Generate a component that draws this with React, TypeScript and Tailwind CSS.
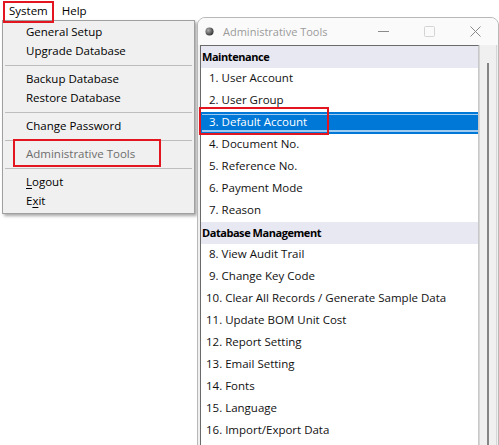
import React from 'react';

type Row = { label: string; kind?: 'header' | 'selected'; wide?: boolean };

const rows: Row[] = [
  { label: 'Maintenance', kind: 'header' },
  { label: '1. User Account' },
  { label: '2. User Group' },
  { label: '3. Default Account', kind: 'selected' },
  { label: '4. Document No.' },
  { label: '5. Reference No.' },
  { label: '6. Payment Mode' },
  { label: '7. Reason' },
  { label: 'Database Management', kind: 'header' },
  { label: '8. View Audit Trail' },
  { label: '9. Change Key Code' },
  { label: '10. Clear All Records / Generate Sample Data', wide: true },
  { label: '11. Update BOM Unit Cost', wide: true },
  { label: '12. Report Setting', wide: true },
  { label: '13. Email Setting', wide: true },
  { label: '14. Fonts', wide: true },
  { label: '15. Language', wide: true },
  { label: '16. Import/Export Data', wide: true },
];

const MenuItem = ({ children, disabled }: { children: React.ReactNode; disabled?: boolean }) => (
  <div className={`h-[19px] flex items-center pl-[23px] pb-[2px] ${disabled ? 'text-[#6d6d6d]' : 'text-black'}`}>
    {children}
  </div>
);

const Separator = () => (
  <div className="h-[9px] flex items-center px-[2px]">
    <div className="w-full h-px bg-[#bdbdbd]" />
  </div>
);

function ListRow({ row }: { row: Row }) {
  if (row.kind === 'header') {
    return (
      <div className="h-[22px] flex items-center pl-[1px] pb-[2px] bg-[#e8e8f3] font-bold text-[11px] tracking-[-0.45px] text-black">
        {row.label}
      </div>
    );
  }
  if (row.kind === 'selected') {
    return (
      <div className="h-[22px] bg-[#0078d7] pl-[1px] py-[2px]">
        <div className="h-full flex items-center border-t border-b-2 border-[#9fcbf0] pl-[7px] pb-[1px] text-white">
          {row.label}
        </div>
      </div>
    );
  }
  return (
    <div className={`h-[22px] flex items-center pb-[2px] text-[#111] ${row.wide ? 'pl-[5px]' : 'pl-[8px]'}`}>
      {row.label}
    </div>
  );
}

export default function App() {
  return (
    <div className="relative w-[499px] h-[445px] overflow-hidden bg-white font-['Open_Sans',sans-serif] text-[11.5px] leading-none">
      {/* Menu bar */}
      <div className="h-[21px] flex items-center pl-[9px] gap-[14px] text-black">
        <span>System</span>
        <span>Help</span>
      </div>

      {/* System dropdown */}
      <div className="absolute left-[2px] top-[20px] w-[193px] py-[2px] bg-[#f0f0f0] border border-[#a0a0a0] shadow-[2px_2px_3px_rgba(0,0,0,0.35)]">
        <MenuItem>General Setup</MenuItem>
        <MenuItem>Upgrade Database</MenuItem>
        <Separator />
        <MenuItem>Backup Database</MenuItem>
        <MenuItem>Restore Database</MenuItem>
        <Separator />
        <MenuItem>Change Password</MenuItem>
        <Separator />
        <MenuItem disabled>Administrative Tools</MenuItem>
        <Separator />
        <MenuItem>
          <span className="underline underline-offset-2">L</span>ogout
        </MenuItem>
        <MenuItem>
          E<span className="underline underline-offset-2">x</span>it
        </MenuItem>
      </div>

      {/* Administrative Tools window */}
      <div className="absolute left-[197px] top-[17px] w-[302px] h-[440px] flex flex-col bg-[#f0f0f0] border border-[#b8b8b8] rounded-t-[8px] overflow-hidden">
        {/* Title bar */}
        <div className="h-[27px] shrink-0 flex items-center bg-[#fafafa]">
          <svg className="ml-[7px] w-[9px] h-[9px]" viewBox="0 0 10 10">
            <defs>
              <radialGradient id="dot" cx="35%" cy="35%" r="65%">
                <stop offset="0%" stopColor="#b0b0b0" />
                <stop offset="100%" stopColor="#3a3a3a" />
              </radialGradient>
            </defs>
            <circle cx="5" cy="5" r="4.5" fill="url(#dot)" />
          </svg>
          <span className="ml-[9px] text-[#9b9b9b] text-[11px]">Administrative Tools</span>
          <div className="ml-auto flex h-full">
            <div className="w-[46px] flex items-center justify-center">
              <svg width="11" height="11" viewBox="0 0 11 11">
                <path d="M0 5.5h11" stroke="#8a8a8a" strokeWidth="1" />
              </svg>
            </div>
            <div className="w-[46px] flex items-center justify-center">
              <svg width="11" height="11" viewBox="0 0 11 11">
                <rect x="0.5" y="0.5" width="10" height="10" fill="none" stroke="#d4d4d4" strokeWidth="1" rx="1" />
              </svg>
            </div>
            <div className="w-[46px] flex items-center justify-center">
              <svg width="11" height="11" viewBox="0 0 11 11">
                <path d="M0.5 0.5l10 10M10.5 0.5l-10 10" stroke="#8a8a8a" strokeWidth="1" />
              </svg>
            </div>
          </div>
        </div>

        {/* Body */}
        <div className="flex-1 flex pl-[2px] pr-[1px]">
          <div className="flex-1 bg-white border-t border-l border-[#6a6a6a] border-r border-r-[#c8c8c8]">
            {rows.map((r) => (
              <ListRow key={r.label} row={r} />
            ))}
          </div>
          <div className="w-[18px] flex flex-col items-center pt-[18px] bg-[#f0f0f0] border-l border-r border-[#d6d6d6]">
            <div className="w-[2px] flex-1 bg-[#858585]" />
          </div>
        </div>
      </div>

      {/* Red highlight boxes */}
      <div className="absolute left-[3px] top-[1px] w-[51px] h-[22px] border-2 border-[#e3161f]" />
      <div className="absolute left-[13px] top-[139px] w-[148px] h-[28px] border-[2.5px] border-[#e3161f]" />
      <div className="absolute left-[199px] top-[107px] w-[130px] h-[28px] border-[2.5px] border-[#e3161f]" />
    </div>
  );
}
